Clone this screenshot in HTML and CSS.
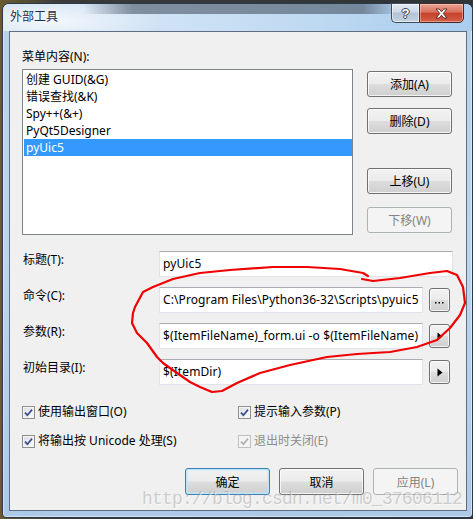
FILE: index.html
```html
<!DOCTYPE html>
<html lang="zh-CN">
<head>
<meta charset="utf-8">
<title>外部工具</title>
<link rel="stylesheet" href="styles.css">
</head>
<body>
<div class="window">
  <div class="titlebar">
    <span class="title">外部工具</span>
    <div class="caption-btns">
      <div class="cap help"><span class="qmark">?</span></div>
      <div class="cap close">
        <svg width="13" height="11" viewBox="0 0 13 11"><path d="M1 1h3.2l2.3 2.8 2.3-2.8h3.2l-3.8 4.5 3.8 4.5h-3.2l-2.3-2.8-2.3 2.8h-3.2l3.8-4.5z" fill="#fff" stroke="#4a2520" stroke-width="0.9" stroke-linejoin="round"/></svg>
      </div>
    </div>
  </div>
  <div class="content">
    <div class="label top-label">菜单内容(N):</div>
    <div class="menu-area">
      <ul class="listbox">
        <li>创建 GUID(&amp;G)</li>
        <li>错误查找(&amp;K)</li>
        <li>Spy++(&amp;+)</li>
        <li>PyQt5Designer</li>
        <li class="selected">pyUic5</li>
      </ul>
      <div class="side-btns">
        <div class="btn side add">添加(A)</div>
        <div class="btn side del">删除(D)</div>
        <div class="btn side up">上移(U)</div>
        <div class="btn side down disabled">下移(W)</div>
      </div>
    </div>
    <div class="fields">
      <div class="label field-label">标题(T):</div>
      <div class="field-wrap"><div class="textbox">pyUic5</div></div>

      <div class="label field-label">命令(C):</div>
      <div class="field-wrap">
        <div class="textbox">C:\Program Files\Python36-32\Scripts\pyuic5</div>
        <div class="btn mini dots"><svg width="9" height="2" viewBox="0 0 9 2"><rect x="0" y="0" width="1.5" height="1.5" fill="#000"/><rect x="3.5" y="0" width="1.5" height="1.5" fill="#000"/><rect x="7" y="0" width="1.5" height="1.5" fill="#000"/></svg></div>
      </div>

      <div class="label field-label">参数(R):</div>
      <div class="field-wrap">
        <div class="textbox">$(ItemFileName)_form.ui -o $(ItemFileName)</div>
        <div class="btn mini"><svg width="6" height="9" viewBox="0 0 6 9"><path d="M0.5 0.5 L5.5 4.5 L0.5 8.5 Z" fill="#000"/></svg></div>
      </div>

      <div class="label field-label">初始目录(I):</div>
      <div class="field-wrap">
        <div class="textbox">$(ItemDir)</div>
        <div class="btn mini"><svg width="6" height="9" viewBox="0 0 6 9"><path d="M0.5 0.5 L5.5 4.5 L0.5 8.5 Z" fill="#000"/></svg></div>
      </div>
    </div>
    <div class="checks">
      <div class="check"><span class="cb"><svg width="9" height="9" viewBox="0 0 9 9"><path d="M1 4.6 L3.4 7.2 L8 1.6" fill="none" stroke="#3b4f8c" stroke-width="1.7"/></svg></span><span>使用输出窗口(O)</span></div>
      <div class="check"><span class="cb"><svg width="9" height="9" viewBox="0 0 9 9"><path d="M1 4.6 L3.4 7.2 L8 1.6" fill="none" stroke="#3b4f8c" stroke-width="1.7"/></svg></span><span>提示输入参数(P)</span></div>
      <div class="check"><span class="cb"><svg width="9" height="9" viewBox="0 0 9 9"><path d="M1 4.6 L3.4 7.2 L8 1.6" fill="none" stroke="#3b4f8c" stroke-width="1.7"/></svg></span><span>将输出按 Unicode 处理(S)</span></div>
      <div class="check disabled"><span class="cb"><svg width="9" height="9" viewBox="0 0 9 9"><path d="M1 4.6 L3.4 7.2 L8 1.6" fill="none" stroke="#b0b0b0" stroke-width="1.7"/></svg></span><span>退出时关闭(E)</span></div>
    </div>
    <div class="footer">
      <div class="btn foot default">确定</div>
      <div class="btn foot">取消</div>
      <div class="btn foot disabled">应用(L)</div>
    </div>
  </div>
</div>
<svg class="annotation" width="473" height="519" viewBox="0 0 473 519">
  <path d="M362 279 L373 281 L400 278 L430 273 L447 271 L457 275 L463 287 L465 303 L460 315 L450 328 L437 340 L417 347 L390 352 L357 354 L327 357 L290 365 L260 373 L237 383 L222 391 L212 392 L200 387 L190 382 L177 373 L163 363 L157 357 L147 343 L137 333 L132 323 L133 313 L135 307 L143 292 L153 287 L173 279 L200 273 L230 270 L273 267 L307 267 L340 269 L363 273 L368 276" fill="none" stroke="#f00000" stroke-width="2.2" stroke-linejoin="round" stroke-linecap="round"/>
</svg>
<div class="watermark">http://blog.csdn.net/m0_37606112</div>
</body>
</html>
```
FILE: styles.css
```css
* { box-sizing: border-box; margin: 0; padding: 0; }
html, body { width: 473px; height: 519px; overflow: hidden; }
body {
  position: relative;
  background: linear-gradient(90deg, #6b5a30 0, #3a3a3a 60px, #2f3438 100%);
  font-family: "Noto Sans", "Noto Sans CJK SC", sans-serif;
  font-size: 12px;
  color: #000;
}
.window {
  margin: 3px 0 0 2px;
  width: 471px;
  height: 515px;
  border: 1px solid #2d3946;
  border-radius: 7px 7px 4px 4px;
  background: linear-gradient(180deg, #b8d1ea 0, #bcd5ee 50%, #adc9e8 100%);
  padding: 0 5px 6px 6px;
  display: flex;
  flex-direction: column;
  box-shadow: inset 0 0 0 1px rgba(255,255,255,0.45);
}
.titlebar {
  height: 27px;
  margin: 0 -5px 0 -6px;
  padding: 0 8px 0 7px;
  display: flex;
  justify-content: space-between;
  align-items: flex-start;
  border-radius: 6px 6px 0 0;
  background:
    linear-gradient(90deg, rgba(0,0,0,0) 80px, rgba(60,72,88,0.55) 130px, rgba(60,72,88,0.55) 360px, rgba(0,0,0,0) 400px) 0 0 / 100% 10px no-repeat,
    radial-gradient(ellipse 110px 22px at 50px 17px, rgba(255,255,255,0.75), rgba(255,255,255,0)),
    linear-gradient(90deg, #d3e3f3 0, #cfe2f5 35%, #c2dbf2 60%, #aacdee 100%);
}
.title {
  padding-top: 5px;
  line-height: 16px;
  font-size: 12px;
  color: #1b2f4c;
  text-shadow: 0 0 6px #fff, 0 0 3px #fff;
}
.caption-btns {
  display: flex;
  margin-top: -1px;
}
.cap {
  height: 20px;
  display: flex;
  align-items: center;
  justify-content: center;
  border: 1px solid #3f4d5c;
}
.help {
  width: 28px;
  border-right: none;
  border-radius: 0 0 0 5px;
  background: linear-gradient(180deg, #e4ecf4 0, #ccd8e4 45%, #b3c3d4 50%, #c5d3e2 100%);
  box-shadow: inset 0 0 0 1px rgba(255,255,255,0.5);
}
.qmark {
  font-family: "Liberation Sans", sans-serif;
  font-weight: bold;
  font-size: 13px;
  line-height: 13px;
  color: #fff;
  text-shadow: 1px 0 0 #3a4654, -1px 0 0 #3a4654, 0 1px 0 #3a4654, 0 -1px 0 #3a4654;
}
.close {
  width: 45px;
  border-color: #4a2a24;
  border-radius: 0 0 5px 0;
  background: linear-gradient(180deg, #e8a493 0, #d9705c 45%, #c7412b 52%, #d2604a 100%);
  box-shadow: inset 0 0 0 1px rgba(255,220,210,0.45);
}
.close svg { display: block; }
.content {
  flex: 1;
  border: 1px solid #5e6d7f;
  background: #f0f0f0;
  padding: 17px 13px 0 12px;
  display: flex;
  flex-direction: column;
}
.label { line-height: 16px; white-space: nowrap; }
.top-label { height: 16px; }
.menu-area {
  margin-top: 4px;
  display: grid;
  grid-template-columns: 331px 85px;
  column-gap: 14px;
}
.listbox {
  list-style: none;
  height: 166px;
  border: 1px solid #7f848c;
  background: #fff;
  padding: 1px 0 0 1px;
}
.listbox li {
  height: 17px;
  line-height: 17px;
  padding-left: 2px;
  white-space: nowrap;
}
.listbox li.selected { background: #3399ff; color: #fff; }
.side-btns { display: flex; flex-direction: column; }
.btn {
  display: flex;
  align-items: center;
  justify-content: center;
  border: 1px solid #707070;
  border-radius: 3px;
  background: linear-gradient(180deg, #f2f2f2 0, #ebebeb 48%, #dddddd 52%, #cfcfcf 100%);
  box-shadow: inset 0 0 0 1px rgba(255,255,255,0.75);
  white-space: nowrap;
}
.btn.disabled {
  border-color: #adb2b5;
  background: #f4f4f4;
  color: #838383;
  box-shadow: none;
}
.btn.default {
  border-color: #3c7fb1;
  box-shadow: inset 0 0 0 1px #bde6fb, inset 0 0 0 2px rgba(190,230,253,0.4);
}
.side { height: 26px; }
.add { margin-top: 2px; }
.del { margin-top: 11px; }
.up { margin-top: 34px; }
.down { margin-top: 13px; }
.fields {
  margin-top: 16px;
  display: grid;
  grid-template-columns: 137px minmax(0, 1fr);
  row-gap: 10px;
}
.field-label { padding: 1px 0 0 1px; }
.field-wrap {
  display: flex;
  align-items: center;
  gap: 6px;
  height: 26px;
  min-width: 0;
}
.textbox {
  flex: 1;
  min-width: 0;
  height: 26px;
  line-height: 24px;
  border: 1px solid #e2e3ea;
  border-top-color: #abadb3;
  background: #fff;
  padding-left: 3px;
  letter-spacing: 0.1px;
  white-space: nowrap;
  overflow: hidden;
}
.mini {
  width: 21px;
  height: 24px;
  margin-right: 3px;
  flex: none;
}
.mini svg { display: block; margin-left: 1px; }
.dots {
  align-items: flex-end;
  padding-bottom: 7px;
}
.dots svg { margin-left: 0; }
.checks {
  margin-top: 19px;
  display: grid;
  grid-template-columns: 216px 1fr;
  row-gap: 13px;
}
.check {
  display: flex;
  align-items: center;
  gap: 3px;
  height: 16px;
  line-height: 16px;
  white-space: nowrap;
}
.cb {
  width: 13px;
  height: 13px;
  flex: none;
  border: 1px solid #8e8f8f;
  background: linear-gradient(135deg, #d9dbe0 0, #eef0f2 60%, #fbfbfb 100%);
  box-shadow: inset 0 0 0 1px #f4f4f4;
  display: flex;
  align-items: center;
  justify-content: center;
}
.cb svg { display: block; }
.check.disabled { color: #8d8d8d; }
.check.disabled .cb { border-color: #c0c0c0; background: #f4f4f4; }
.footer {
  margin-top: 19px;
  margin-right: -5px;
  display: flex;
  justify-content: flex-end;
  gap: 9px;
}
.foot { width: 85px; height: 27px; }
.annotation {
  position: absolute;
  left: 0;
  top: 0;
  pointer-events: none;
}
.watermark {
  position: absolute;
  left: 142px;
  top: 490px;
  font-family: "Liberation Mono", monospace;
  font-size: 18px;
  line-height: 18px;
  letter-spacing: -0.8px;
  color: rgba(150,150,150,0.42);
  text-shadow: 1px 1px 0 rgba(255,255,255,0.5);
  white-space: nowrap;
  pointer-events: none;
}
```
